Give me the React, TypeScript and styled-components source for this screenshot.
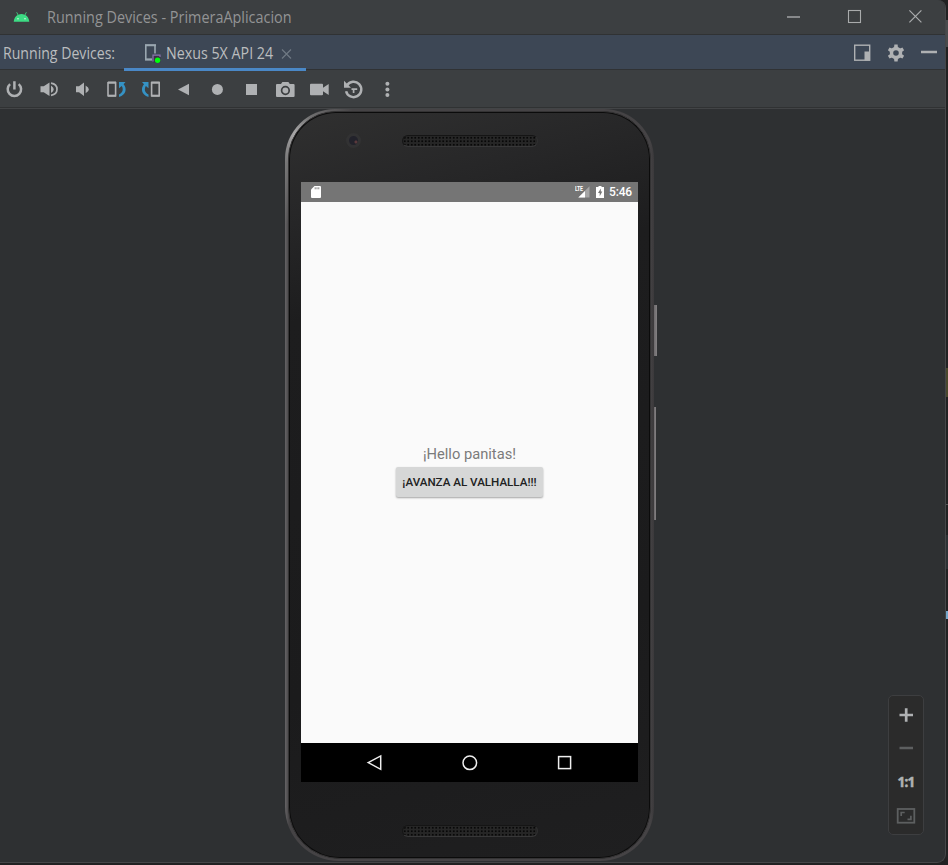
import React from "react";
import styled, { createGlobalStyle } from "styled-components";

const GlobalStyle = createGlobalStyle`
  html, body { margin: 0; padding: 0; background: #212122; overflow: hidden; }
  * { box-sizing: border-box; }
  svg { display: block; overflow: visible; flex: none; }
`;

const ui = `"Open Sans", "Noto Sans", sans-serif`;

const Desktop = styled.div`
  display: flex;
  width: 948px;
  height: 865px;
  background: #212122;
  overflow: hidden;
`;

const Window = styled.main`
  display: flex;
  flex-direction: column;
  width: 946px;
  height: 863px;
  border-right: 1px solid #454648;
  border-bottom: 1px solid #454648;
  border-radius: 0 8px 9px 0;
  background: #2e3032;
  overflow: hidden;
`;

const Edge = styled.aside`
  display: flex;
  flex-direction: column;
  width: 2px;
`;

const EdgeMark = styled.i<{ $gap: number; $height: number; $color: string }>`
  display: block;
  flex: none;
  margin-top: ${(p) => p.$gap}px;
  height: ${(p) => p.$height}px;
  background: ${(p) => p.$color};
`;

const TitleBar = styled.header`
  display: flex;
  align-items: center;
  flex: none;
  height: 35px;
  padding-left: 13px;
  background: #3c3f41;
  border-bottom: 1px solid #303233;
`;

const Title = styled.h1`
  flex: 1;
  margin: 0 0 0 18px;
  font: 400 15.5px/20px ${ui};
  transform: scaleX(0.93);
  transform-origin: 0 50%;
  color: #939495;
  white-space: nowrap;
`;

const WindowControls = styled.div`
  display: flex;
  gap: 47px;
  padding-right: 22px;
`;

const ToolHeader = styled.div`
  display: flex;
  align-items: stretch;
  flex: none;
  height: 35px;
  padding-left: 3px;
  background: #3d4755;
  border-bottom: 1px solid #303234;
`;

const HeaderLabel = styled.span`
  width: 121px;
  font: 400 15.5px/37px ${ui};
  transform: scaleX(0.91);
  transform-origin: 0 50%;
  color: #bbbdbf;
  white-space: nowrap;
`;

const Tab = styled.div`
  display: flex;
  align-items: center;
  width: 182px;
  height: 36px;
  padding: 2px 0 0 20px;
  border-bottom: 3px solid #4a88c7;
  z-index: 1;

  svg { margin-top: 2px; }
`;

const TabName = styled.span`
  width: 107px;
  margin: 0 8px 0 5px;
  font: 400 15.5px/20px ${ui};
  transform: scaleX(0.92);
  transform-origin: 0 50%;
  color: #bbbdbf;
  white-space: nowrap;
`;

const HeaderActions = styled.div`
  display: flex;
  align-items: center;
  gap: 16px;
  margin-left: auto;
  padding: 1px 7px 0 0;
`;

const Toolbar = styled.nav`
  display: flex;
  gap: 14px;
  flex: none;
  height: 38px;
  padding: 9px 5px;
  background: #3c3f41;
  border-bottom: 1px solid #303233;
`;

const Stage = styled.section`
  display: grid;
  grid-template-columns: 285px 372px 1fr 57px;
  flex: 1;
  min-height: 0;
  border-top: 1px solid #424446;
`;

const Device = styled.div`
  display: flex;
  grid-column: 2;
`;

const Frame = styled.div`
  width: 369px;
  height: 752px;
  padding: 2px 3px 2px 3px;
  border-radius: 50px 50px 54px 54px;
  background:
    radial-gradient(ellipse 60px 90px at 10px 26px, #aaa9aa 0, rgba(130, 130, 130, 0.7) 33%, rgba(80, 80, 80, 0) 100%),
    linear-gradient(90deg, #656365 0, #454345 4px, #454345 365px, #3b393b 100%);
`;

const Bezel = styled.div`
  height: 748px;
  padding: 1px;
  border: 1px solid #343334;
  border-radius: 48px 48px 52px 52px;
  background: #0b0b0b;
`;

const Face = styled.div`
  display: flex;
  flex-direction: column;
  height: 744px;
  padding: 0 11px;
  border-radius: 46px 46px 50px 50px;
  background: linear-gradient(165deg, #303030 0, #272728 12%, #1d1d1e 25%, #1b1b1c 70%, #1f1f20 100%);
`;

const Forehead = styled.div`
  display: flex;
  align-items: center;
  flex: none;
  height: 69px;
  padding: 0 0 14px 45px;
`;

const Lens = styled.i`
  width: 15px;
  height: 15px;
  margin-right: 41px;
  border-radius: 50%;
  border: 3px solid #323233;
  background: radial-gradient(circle at 7px 6px, #5a393c 0 1px, #22222b 2px 100%);
`;

const Speaker = styled.i`
  display: block;
  width: 136px;
  height: 12px;
  border: 1px solid #151515;
  border-bottom-color: #373738;
  border-right-color: #303031;
  border-radius: 6px;
  background: radial-gradient(circle, #080808 0 0.8px, #262626 1.3px) 0 0 / 3.5px 3.5px;
`;

const Chin = styled.div`
  display: flex;
  align-items: flex-start;
  justify-content: center;
  flex: 1;
  padding-top: 43px;
`;

const Screen = styled.div`
  display: flex;
  flex-direction: column;
  flex: none;
  width: 337px;
  height: 600px;
  background: #fafafa;
`;

const StatusBar = styled.div`
  display: flex;
  align-items: center;
  height: 20px;
  padding: 0 5px 0 10px;
  background: #757575;
`;

const Lte = styled.span`
  margin-left: auto;
  align-self: flex-start;
  width: 3px;
  margin-top: 3px;
  font: 700 7.5px/8px Roboto, sans-serif;
  letter-spacing: -0.4px;
  transform: scaleX(0.7);
  transform-origin: 0 50%;
  color: #fff;
  z-index: 1;
`;

const Battery = styled.svg`
  margin-left: 6px;
`;

const Clock = styled.time`
  width: 24px;
  margin-left: 4.5px;
  font: 500 12px/20px Roboto, sans-serif;
  letter-spacing: -0.15px;
  color: #fff;
`;

const AppBody = styled.div`
  display: flex;
  flex-direction: column;
  align-items: center;
  flex: 1;
  padding-top: 241.5px;
`;

const Greeting = styled.p`
  margin: 0;
  font: 400 14.7px/20px Roboto, sans-serif;
  color: #7b7b7b;
`;

const AppButton = styled.button`
  width: 147px;
  height: 30px;
  margin: 3.5px 0 0;
  padding: 0;
  border: 0;
  border-radius: 2px;
  background: #d6d7d7;
  box-shadow: 0 1px 2px rgba(0, 0, 0, 0.35);
  font: 500 11.6px/30px Roboto, sans-serif;
  color: #202121;
  white-space: nowrap;
`;

const NavBar = styled.div`
  display: flex;
  align-items: center;
  justify-content: center;
  gap: 79px;
  height: 39px;
  background: #000;
`;

const SideKeys = styled.div`
  display: flex;
  flex-direction: column;
  padding-top: 196px;
`;

const SideKey = styled.i<{ $height: number; $width: number; $gap?: number }>`
  width: ${(p) => p.$width}px;
  height: ${(p) => p.$height}px;
  margin-top: ${(p) => p.$gap ?? 0}px;
  background: linear-gradient(90deg, #6c696b, #848183);
`;

const ZoomPanel = styled.div`
  display: flex;
  flex-direction: column;
  align-items: center;
  gap: 13.7px;
  grid-column: 4;
  align-self: end;
  width: 36px;
  height: 140px;
  margin: 0 0 27px 0;
  padding-top: 8.5px;
  border: 1px solid #3d3e40;
  border-radius: 5px;
  background: #2b2b2b;
`;

const ActualSize = styled.span`
  height: 20px;
  font: 700 13.5px/20px "Noto Sans", sans-serif;
  letter-spacing: -0.8px;
  color: #b0b2b3;
  -webkit-text-stroke: 0.5px #b0b2b3;
`;

const c = "#afb1b3";
const blue = "#3592c4";

const Icon = ({ children, size = 20 }: { children: React.ReactNode; size?: number }) => (
  <svg width={size} height={size} viewBox={`0 0 ${size} ${size}`} fill="none">
    {children}
  </svg>
);

const toolIcons: React.ReactNode[] = [
  <g stroke={c} strokeWidth="2.5"><path d="M5.1 5.1A6.7 6.7 0 1 0 13.7 5.1M9.4 2.3V10.6" /></g>,
  <g><path d="M1.5 7.3H4.7L10.5 3.5V17L4.7 13.3H1.5Z" fill={c} /><path d="M12 6.5Q17.5 10.3 12 14.1Z" fill={c} /><path d="M12 4.2C20 5.6 20 15 12 16.4" stroke={c} strokeWidth="1.7" /></g>,
  <g><path d="M3 7.3H6L11 3.5V17L6 13.3H3Z" fill={c} /><path d="M12.6 6.4Q19.2 10.3 12.6 14.2Z" fill={c} /></g>,
  <g><rect x="1" y="3.7" width="7.6" height="13" stroke={c} strokeWidth="1.6" /><path d="M1 3.5H9M1 16.8H9" stroke={c} strokeWidth="2" /><path d="M12 3H18.5L16.6 5.2C20 9 19.6 15.5 12 18V15.6C16 13.8 16.6 10 14.7 7.1L12 9.3Z" fill={blue} /></g>,
  <g><rect x="10.6" y="3.7" width="7.6" height="13" stroke={c} strokeWidth="1.6" /><path d="M10.2 3.5H18.6M10.2 16.8H18.6" stroke={c} strokeWidth="2" /><path d="M1 3H7.5V9.3L4.9 7.1C3 10 3.6 13.8 7.5 15.6V18C0 15.5-.4 9 3 5.2Z" fill={blue} /></g>,
  <path d="M3 10.5L14 4.7V16.3Z" fill={c} />,
  <circle cx="8.4" cy="10.4" r="5.5" fill={c} />,
  <rect x="3" y="5" width="11" height="11" fill={c} />,
  <g><path d="M0 5H4L5.4 3H11.4L12.8 5H16.5Q17.6 5 17.6 6V17Q17.6 18 16.5 18H0Q-1 18-1 17V6Q-1 5 0 5Z" fill={c} /><circle cx="8.4" cy="11.5" r="3.8" stroke="#3c3f41" strokeWidth="1.7" /></g>,
  <path d="M0 4.8H11Q12 4.8 12 5.8V8.7L17.7 5V16L12 12.3V15.2Q12 16.2 11 16.2H0Q-1 16.2-1 15.2V5.8Q-1 4.8 0 4.8Z" fill={c} />,
  <g><path d="M2 6.4A7.7 7.7 0 1 1 1.1 12.2" stroke={c} strokeWidth="2.5" /><path d="M-1 1.8V8.8H6Z" fill={c} /><path d="M6.5 10.2H12.2M8.6 9.4V14" stroke={c} strokeWidth="1.7" /></g>,
  <g fill={c}><circle cx="8.4" cy="4.8" r="2" /><circle cx="8.4" cy="10.4" r="2" /><circle cx="8.4" cy="16" r="2" /></g>,
];

const teeth = [0, 60, 120, 180, 240, 300];

export default function App() {
  return (
    <>
      <GlobalStyle />
      <Desktop>
        <Window>
          <TitleBar>
            <svg width="16" height="12" viewBox="-0.5 0.7 16 12">
              <path d="M.2 11.5C.5 8.3 2.1 6 4.2 4.8L2.8 2.2 3.4 1.8 4.9 4.4Q8 3.1 11.1 4.4L12.6 1.8 13.2 2.2 11.8 4.8C13.9 6 15.5 8.3 15.8 11.5Z" fill="#3ddc84" />
              <circle cx="4.5" cy="8.4" r=".8" fill="#d8f6e5" /><circle cx="11.5" cy="8.4" r=".8" fill="#d8f6e5" />
            </svg>
            <Title>Running Devices - PrimeraAplicacion</Title>
            <WindowControls>
              <Icon size={14}><path d="M0 7H13" stroke="#a1a3a4" strokeWidth="1.4" /></Icon>
              <Icon size={14}><rect x=".5" y=".5" width="12" height="12" stroke="#a9abac" strokeWidth="1.1" /></Icon>
              <Icon size={14}><path d="M.4 .4L12.4 12.4M12.4 .4L.4 12.4" stroke="#a9abac" strokeWidth="1.2" /></Icon>
            </WindowControls>
          </TitleBar>

          <ToolHeader>
            <HeaderLabel>Running Devices:</HeaderLabel>
            <Tab>
              <svg width="17" height="19" viewBox="0 0 17 19" fill="none">
                <path d="M8 15.5H1.8V1.3H11V9.5" stroke="#9aa7b0" strokeWidth="1.6" />
                <path d="M1 1.3H12M1 15.5H8" stroke="#9aa7b0" strokeWidth="2" />
                <rect x="9.5" y="11.5" width="7" height="7" fill="#3b3448" />
                <path d="M9 17.5V11.2H16V13" stroke="#8a74ad" strokeWidth="1.2" />
                <circle cx="13.6" cy="16.2" r="2.7" fill="#00ff0c" />
              </svg>
              <TabName>Nexus 5X API 24</TabName>
              <Icon size={10}><path d="M1 .5L10 9.5M10 .5L1 9.5" stroke="#6f7983" strokeWidth="1.2" /></Icon>
            </Tab>
            <HeaderActions>
              <Icon size={18}><rect x="1.7" y="1.2" width="15" height="15" stroke={c} strokeWidth="1.4" /><path d="M11.5 7.5H17V16.5H11.5Z" fill={c} /></Icon>
              <Icon size={18}>
                <circle cx="9" cy="9" r="4.5" stroke={c} strokeWidth="3.4" />
                {teeth.map((a) => <path key={a} d="M7 3.8L7.4 .6H10.6L11 3.8Z" fill={c} transform={`rotate(${a} 9 9)`} />)}
              </Icon>
              <Icon size={17}><path d="M0 8H16" stroke={c} strokeWidth="2.4" /></Icon>
            </HeaderActions>
          </ToolHeader>

          <Toolbar>{toolIcons.map((g, i) => <Icon key={i}>{g}</Icon>)}</Toolbar>

          <Stage>
            <Device>
              <Frame>
                <Bezel>
                  <Face>
                    <Forehead><Lens /><Speaker /></Forehead>
                    <Screen>
                      <StatusBar>
                        <svg width="10" height="12" viewBox="0 0 10 12"><path d="M3.5 0H9Q10 0 10 1V11Q10 12 9 12H1Q0 12 0 11V3.5Z" fill="#fff" /><path d="M4.2 1.3V3.3M6 1.3V3.3M7.8 1.3V3.3" stroke="#757575" strokeWidth=".9" /></svg>
                        <Lte>LTE</Lte>
                        <svg width="12" height="12" viewBox="0 0 12 12"><path d="M11.5 .3V11.5H.3Z" fill="#a6a6a6" /><path d="M7 5V11.5H.3Z" fill="#fff" /></svg>
                        <Battery width="9" height="12" viewBox="0 0 9 12"><path d="M2.5 0H5.5V1H8V12H0V1H2.5Z" fill="#fff" /><path d="M4.8 2.5L2 7H3.7V10.3L6.3 5.6H4.8Z" fill="#757575" /></Battery>
                        <Clock>5:46</Clock>
                      </StatusBar>
                      <AppBody>
                        <Greeting>¡Hello panitas!</Greeting>
                        <AppButton>¡AVANZA AL VALHALLA!!!</AppButton>
                      </AppBody>
                      <NavBar>
                        <Icon size={16}><path d="M1.2 7.6L13.7 .9V14.3Z" stroke="#eee" strokeWidth="1.5" /></Icon>
                        <Icon size={16}><circle cx="7.8" cy="7.8" r="6.8" stroke="#eee" strokeWidth="1.5" /></Icon>
                        <Icon size={16}><rect x="1.6" y="1.6" width="12" height="12" stroke="#eee" strokeWidth="1.5" /></Icon>
                      </NavBar>
                    </Screen>
                    <Chin><Speaker /></Chin>
                  </Face>
                </Bezel>
              </Frame>
              <SideKeys>
                <SideKey $width={3} $height={51} />
                <SideKey $width={2} $height={113} $gap={51} />
              </SideKeys>
            </Device>
            <ZoomPanel>
              <Icon><path d="M3.5 10H17M10.2 3.3V16.7" stroke={c} strokeWidth="2.7" /></Icon>
              <Icon><path d="M3.5 10H17" stroke="#5d5f60" strokeWidth="2.5" /></Icon>
              <ActualSize>1:1</ActualSize>
              <Icon>
                <rect x="1.7" y="3" width="16.6" height="13.7" stroke="#5d5f60" strokeWidth="1.8" />
                <path d="M5.2 10V6.5H8.7M11.5 13.3H14.9V9.8" stroke="#5d5f60" strokeWidth="1.7" />
              </Icon>
            </ZoomPanel>
          </Stage>
        </Window>
        <Edge>
          <EdgeMark $gap={20} $height={27} $color="#494b4d" />
          <EdgeMark $gap={321} $height={29} $color="#4a482d" />
          <EdgeMark $gap={107} $height={1} $color="#555657" />
          <EdgeMark $gap={30} $height={34} $color="#2d3134" />
          <EdgeMark $gap={42} $height={8} $color="#75a7cc" />
        </Edge>
      </Desktop>
    </>
  );
}
